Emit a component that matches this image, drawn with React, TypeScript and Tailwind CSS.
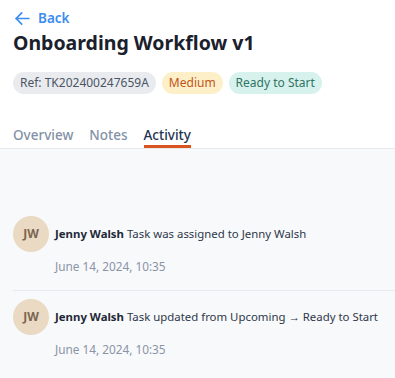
import React from "react";

const font = { fontFamily: '"Noto Sans", "Open Sans", sans-serif' };

function Item({ text }: { text: string }) {
  return (
    <div className="px-[13px] pt-2 pb-[14px]">
      <div className="flex items-center gap-[6px]">
        <div className="w-9 h-9 rounded-full bg-[#ead9c3] flex items-center justify-center text-[12px] font-bold text-[#7a6650] shrink-0">
          JW
        </div>
        <div className="text-[11.4px] text-[#2d3748] whitespace-nowrap">
          <span className="font-bold text-[#1f2937]">Jenny Walsh</span> {text}
        </div>
      </div>
      <div className="pl-[42px] mt-[4px] text-[11.8px] leading-5 text-[#8a94a6]">June 14, 2024, 10:35</div>
    </div>
  );
}

export default function App() {
  return (
    <div className="w-[395px] h-[378px] bg-white overflow-hidden" style={font}>
      <div className="px-[13px] pt-[8px]">
        <div className="flex items-center gap-[6px] text-[#3b8cf0] text-[13.5px] font-semibold leading-5">
          <svg width="19" height="19" viewBox="0 0 24 24" fill="none" stroke="currentColor" strokeWidth="2.2" strokeLinecap="round" strokeLinejoin="round">
            <path d="M20 12H4" />
            <path d="M11 19l-7-7 7-7" />
          </svg>
          <span>Back</span>
        </div>
        <h1 className="mt-[1px] text-[19.5px] font-bold text-[#1a202c] leading-7">Onboarding Workflow v1</h1>
        <div className="mt-[15px] flex gap-[6px] text-[12px] leading-[22px]">
          <span className="px-[7px] rounded-full bg-[#e9ebef] text-[#4b5563]">Ref: TK202400247659A</span>
          <span className="px-[7px] rounded-full bg-[#fdf0c8] text-[#c2541a]">Medium</span>
          <span className="px-[7px] rounded-full bg-[#d7f1ec] text-[#2f7565]">Ready to Start</span>
        </div>
        <div className="mt-[31px] flex items-end gap-4 text-[13.5px] font-medium leading-5">
          <span className="text-[#8391a7] pb-[3px]">Overview</span>
          <span className="text-[#8391a7] pb-[3px]">Notes</span>
          <span className="text-[#1e3553] border-b-[3px] border-[#d9541e]">Activity</span>
        </div>
      </div>
      <div className="border-t border-[#e8eaee] bg-[#f8f9fb] h-full pt-[59px]">
        <Item text="Task was assigned to Jenny Walsh" />
        <div className="ml-[13px] border-t border-[#e8eaee]" />
        <Item text="Task updated from Upcoming → Ready to Start" />
      </div>
    </div>
  );
}
